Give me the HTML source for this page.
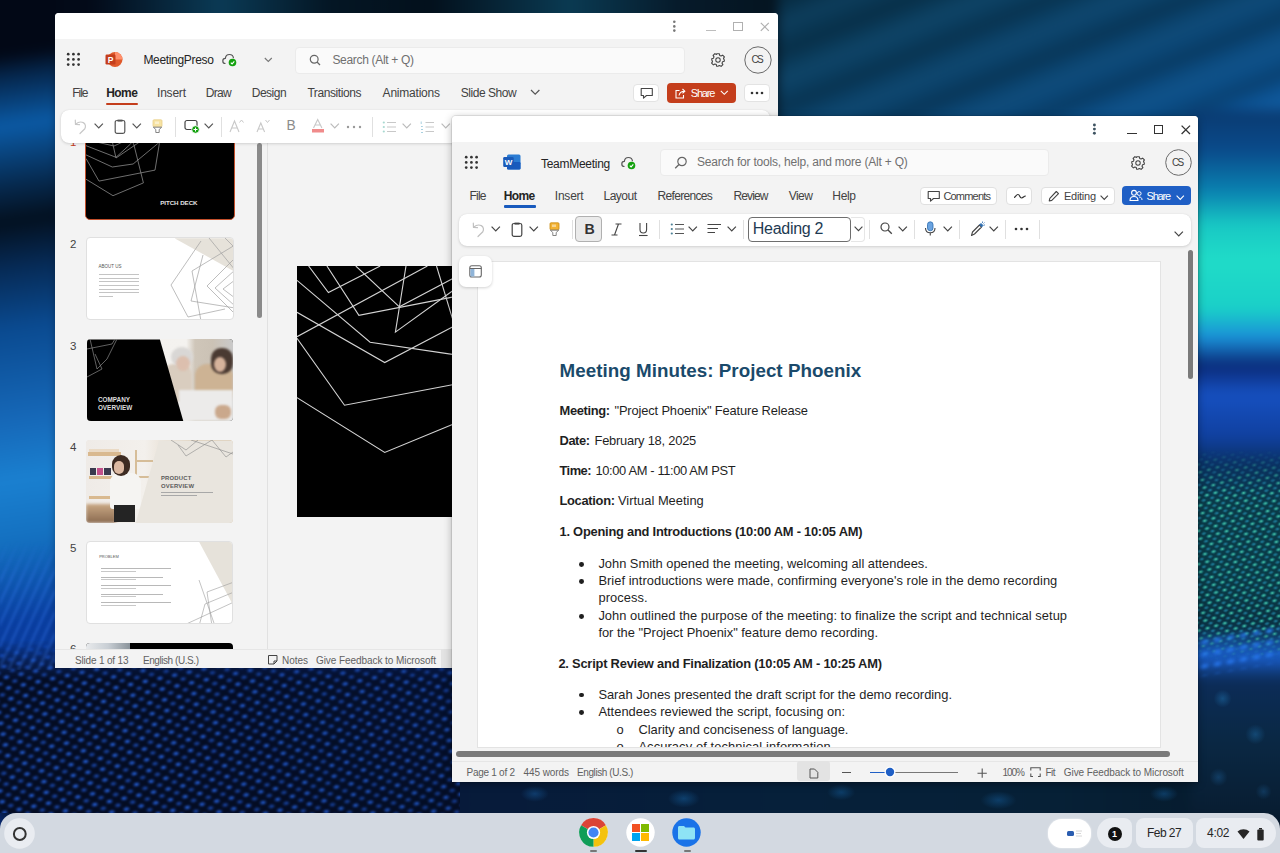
<!DOCTYPE html>
<html><head><meta charset="utf-8">
<style>
*{box-sizing:border-box;margin:0;padding:0}
html,body{width:1280px;height:853px;overflow:hidden;background:#041226;font-family:"Liberation Sans",sans-serif;position:relative}
.a{position:absolute}
.t{position:absolute;white-space:pre;line-height:1;font-family:"Liberation Sans",sans-serif}
svg.a{overflow:visible}
</style></head><body>
<div class="a" style="left:0;top:0;width:1280px;height:853px;overflow:hidden">
<div class="a" style="left:-40px;top:-40px;width:1360px;height:933px;filter:blur(6px)">
<div class="a" style="left:0px;top:0px;width:1360px;height:170px;background:linear-gradient(90deg,#030a18 0px,#030a18 130px,#0a3a55 260px,#041624 370px,#03101c 470px,#0a3a52 610px,#061a2a 720px,#051420 818px,#0a3a5e 1000px)"></div>
<div class="a" style="left:818px;top:0px;width:542px;height:170px;background:repeating-linear-gradient(-22deg,rgba(0,0,0,0) 0px,rgba(0,0,0,.18) 14px,rgba(0,0,0,0) 28px,rgba(80,160,220,.08) 40px,rgba(0,0,0,0) 52px),linear-gradient(160deg,#072c42 0%,#0a3c5c 30%,#0a426c 55%,#0b4e88 80%,#0c5cac 100%)"></div>
<div class="a" style="left:0px;top:0px;width:100px;height:900px;background:linear-gradient(172deg,#020816 0%,#020816 11%,#05254a 13.3%,#0b5aa5 18.9%,#06284c 25.6%,#03101f 29.4%,#062a55 34.4%,#0a4a90 41.1%,#1668b8 51.1%,#1a80d0 57.8%,#1470c0 64.4%,#0a3ea0 73.3%,#0a3490 84.4%,#082a78 94.8%,#061c50 100%)"></div>
<div class="a" style="left:40px;top:700px;width:470px;height:160px;background:linear-gradient(180deg,#0a2870 0%,#0a2460 35%,#081c48 70%,#061630 100%)"></div>
<div class="a" style="left:40px;top:700px;width:120px;height:120px;background:radial-gradient(ellipse at 30% 30%,rgba(30,80,190,.6),rgba(0,0,0,0) 70%)"></div>
<div class="a" style="left:480px;top:815px;width:880px;height:50px;background:linear-gradient(90deg,#071a3a 0%,#06203a 40%,#062036 70%,#051828 100%)"></div>
<div class="a" style="left:1230px;top:150px;width:130px;height:710px;background:linear-gradient(180deg,#0a3a70 0%,#0a4a8a 5.6%,#0a80b0 11.3%,#18c8c4 16.2%,#20dcc8 21.1%,#1ad0c8 28%,#1a90d8 32%,#0a2a78 36%,#1650c0 40%,#1040a0 46%,#0a3060 50%,#0a3a48 55%,#0a3a46 66%,#0a3040 73%,#1a60d0 76.8%,#0c2c58 80.3%,#0a2844 88.7%,#081c30 100%)"></div>
</div></div>
<div class="a" style="left:0;top:640px;width:460px;height:173px;overflow:hidden;-webkit-mask-image:linear-gradient(180deg,rgba(0,0,0,0) 0px,#000 40px)">
<div class="a" style="left:-100px;top:-230px;width:720px;height:540px;transform:rotate(-12deg);background:radial-gradient(ellipse 4px 2.4px at 50% 50%,rgba(55,125,255,1) 0%,rgba(30,90,225,.65) 55%,rgba(0,0,0,0) 100%) 0 0/15px 11px,radial-gradient(ellipse 3.8px 2.2px at 50% 50%,rgba(45,110,245,.95) 0%,rgba(30,90,220,.55) 55%,rgba(0,0,0,0) 100%) 7.5px 5.5px/15px 11px,#040c22;filter:blur(1px);-webkit-mask-image:linear-gradient(90deg,#000 0%,#000 35%,rgba(0,0,0,.75) 100%)"></div>
</div>
<div class="a" style="left:0;top:540px;width:55px;height:130px;overflow:hidden;background:repeating-linear-gradient(-65deg,rgba(30,90,230,.0) 0 4px,rgba(60,130,250,.3) 6px,rgba(0,0,0,0) 9px);filter:blur(.8px);-webkit-mask-image:linear-gradient(180deg,rgba(0,0,0,0),#000 30%)"></div>
<div class="a" style="left:452px;top:781px;width:828px;height:32px;overflow:hidden;background:radial-gradient(ellipse 14px 8px at 10% 40%,rgba(20,80,140,.6),transparent),radial-gradient(ellipse 16px 9px at 28% 55%,rgba(20,90,150,.55),transparent),radial-gradient(ellipse 14px 8px at 47% 35%,rgba(20,90,150,.5),transparent),radial-gradient(ellipse 18px 9px at 66% 60%,rgba(20,90,150,.5),transparent),radial-gradient(ellipse 14px 8px at 86% 40%,rgba(20,90,150,.5),transparent)"></div>
<div class="a" style="left:1198px;top:450px;width:82px;height:210px;overflow:hidden;-webkit-mask-image:linear-gradient(180deg,rgba(0,0,0,0),#000 20%,#000 85%,rgba(0,0,0,0))">
<div class="a" style="left:-60px;top:-40px;width:220px;height:280px;transform:rotate(-16deg);background:radial-gradient(ellipse 3.4px 2.2px at 50% 50%,rgba(90,220,180,.95) 0%,rgba(30,150,150,.6) 60%,rgba(0,0,0,0) 100%) 0 0/9px 8px,radial-gradient(ellipse 3px 2px at 50% 50%,rgba(40,160,200,.8) 0%,rgba(0,0,0,0) 100%) 4.5px 4px/9px 8px;filter:blur(0.7px)"></div>
</div>
<div class="a" style="left:1198px;top:670px;width:82px;height:143px;background:radial-gradient(circle 9px at 30% 20%,rgba(30,110,170,.5),transparent),radial-gradient(circle 10px at 70% 45%,rgba(30,110,170,.45),transparent),radial-gradient(circle 9px at 25% 75%,rgba(30,100,160,.4),transparent),radial-gradient(circle 8px at 80% 85%,rgba(30,100,160,.35),transparent)"></div>
<div class="a" style="left:1198px;top:630px;width:82px;height:40px;background:radial-gradient(ellipse 6px 4px at 50% 50%,rgba(40,120,240,.95),rgba(0,0,0,0)) 0 0/13px 12px;transform:skewY(-10deg);filter:blur(.8px)"></div>
<div class="a" style="left:55px;top:13px;width:723px;height:655px;background:#f3f3f3;border-radius:4px 4px 0 0"></div>
<div class="a" style="left:55px;top:13px;width:723px;height:26px;background:#fff;border-radius:4px 4px 0 0"></div>
<svg class="a" style="left:670px;top:18px;" width="10" height="16" viewBox="0 0 10 16"><circle cx="4.3" cy="3.8" r="1.3" fill="#777"/><circle cx="4.3" cy="8.4" r="1.3" fill="#777"/><circle cx="4.3" cy="12.6" r="1.3" fill="#777"/></svg>
<div class="a" style="left:706px;top:30px;width:10px;height:1px;background:#bdbdbd"></div>
<div class="a" style="left:733px;top:22px;width:10px;height:9px;border:1.3px solid #b0b0b0"></div>
<svg class="a" style="left:760px;top:22px;" width="10" height="10" viewBox="0 0 10 10"><path d="M0.8 0.8L8.8 8.8M8.8 0.8L0.8 8.8" stroke="#b0b0b0" stroke-width="1.2"/></svg>
<svg class="a" style="left:66px;top:52px;" width="16" height="16" viewBox="0 0 16 16"><circle cx="2.2" cy="2.2" r="1.35" fill="#333"/><circle cx="2.2" cy="7.4" r="1.35" fill="#333"/><circle cx="2.2" cy="12.600000000000001" r="1.35" fill="#333"/><circle cx="7.4" cy="2.2" r="1.35" fill="#333"/><circle cx="7.4" cy="7.4" r="1.35" fill="#333"/><circle cx="7.4" cy="12.600000000000001" r="1.35" fill="#333"/><circle cx="12.600000000000001" cy="2.2" r="1.35" fill="#333"/><circle cx="12.600000000000001" cy="7.4" r="1.35" fill="#333"/><circle cx="12.600000000000001" cy="12.600000000000001" r="1.35" fill="#333"/></svg>
<svg class="a" style="left:104px;top:51px;" width="20" height="18" viewBox="0 0 20 18"><circle cx="11" cy="8.5" r="7.5" fill="#e0592a"/><path d="M11 1A7.5 7.5 0 0 1 18.5 8.5H11Z" fill="#ff8f6b"/><rect x="1.5" y="3.5" width="10" height="10" rx="1.2" fill="#c43e1c"/><text x="6.5" y="11.8" font-family="Liberation Sans" font-weight="700" font-size="8.5" fill="#fff" text-anchor="middle">P</text></svg>
<div class="t" style="left:143.40px;top:53.84px;font-size:12px;font-weight:400;color:#242424;letter-spacing:-0.322px;">MeetingPreso</div>
<svg class="a" style="left:222px;top:53px;" width="16" height="14" viewBox="0 0 16 14"><path d="M3.5 10.5C1.8 10.5 0.8 9.3 0.8 7.9C0.8 6.5 1.9 5.4 3.3 5.4C3.6 3.2 5.3 1.5 7.4 1.5C9.6 1.5 11.3 3.2 11.5 5.3" fill="none" stroke="#555" stroke-width="1.2"/><circle cx="10.5" cy="9.5" r="3.8" fill="#13a10e"/><path d="M8.8 9.6L10.1 10.9L12.3 8.4" fill="none" stroke="#fff" stroke-width="1.1"/></svg>
<svg class="a" style="left:264px;top:57px;" width="9" height="6" viewBox="0 0 9 6"><path d="M0.8 1L4.3 4.5L7.8 1" fill="none" stroke="#777" stroke-width="1.1"/></svg>
<div class="a" style="left:294.6px;top:47px;width:390px;height:26.5px;background:#fafafa;border:1px solid #ebebeb;border-radius:4px"></div>
<svg class="a" style="left:309px;top:54px;" width="13" height="13" viewBox="0 0 13 13"><circle cx="5.2" cy="5.2" r="3.9" fill="none" stroke="#666" stroke-width="1.2"/><path d="M8 8L11 11" stroke="#666" stroke-width="1.3"/></svg>
<div class="t" style="left:332.40px;top:53.84px;font-size:12px;font-weight:400;color:#707070;letter-spacing:-0.318px;">Search (Alt + Q)</div>
<svg class="a" style="left:710.5px;top:52.7px;" width="14" height="14" viewBox="0 0 14 14"><g transform="translate(7,7)"><path d="M-1.3,-6.3 L1.3,-6.3 L1.7,-4.6 L3.1,-4 L4.6,-4.9 L6.4,-3.1 L5.5,-1.6 L6.1,-0.2 L6.3,0 L6.3,1.3 L4.6,1.7 L4,3.1 L4.9,4.6 L3.1,6.4 L1.6,5.5 L0.2,6.1 L-1.3,6.3 L-1.7,4.6 L-3.1,4 L-4.6,4.9 L-6.4,3.1 L-5.5,1.6 L-6.1,0.2 L-6.3,-1.3 L-4.6,-1.7 L-4,-3.1 L-4.9,-4.6 L-3.1,-6.4 L-1.6,-5.5 Z" fill="none" stroke="#444" stroke-width="1.1" stroke-linejoin="round"/><circle r="2.2" fill="none" stroke="#444" stroke-width="1.1"/></g></svg>
<svg class="a" style="left:743.5px;top:45.7px;" width="28" height="28" viewBox="0 0 28 28"><circle cx="14" cy="14" r="13.2" fill="none" stroke="#6a6a6a" stroke-width="1"/></svg>
<div class="t" style="left:751.40px;top:55.44px;font-size:10px;font-weight:400;color:#424242;letter-spacing:-1.706px;">CS</div>
<div class="t" style="left:72.30px;top:86.84px;font-size:12px;font-weight:400;color:#424242;letter-spacing:-1.048px;">File</div>
<div class="t" style="left:157.00px;top:86.84px;font-size:12px;font-weight:400;color:#424242;letter-spacing:-0.203px;">Insert</div>
<div class="t" style="left:205.80px;top:86.84px;font-size:12px;font-weight:400;color:#424242;letter-spacing:-0.672px;">Draw</div>
<div class="t" style="left:251.70px;top:86.84px;font-size:12px;font-weight:400;color:#424242;letter-spacing:-0.472px;">Design</div>
<div class="t" style="left:307.40px;top:86.84px;font-size:12px;font-weight:400;color:#424242;letter-spacing:-0.425px;">Transitions</div>
<div class="t" style="left:382.60px;top:86.84px;font-size:12px;font-weight:400;color:#424242;letter-spacing:-0.219px;">Animations</div>
<div class="t" style="left:460.80px;top:86.84px;font-size:12px;font-weight:400;color:#424242;letter-spacing:-0.472px;">Slide Show</div>
<div class="t" style="left:106.20px;top:86.84px;font-size:12px;font-weight:700;color:#242424;letter-spacing:-0.548px;">Home</div>
<div class="a" style="left:106px;top:103px;width:32px;height:2.2px;background:#c43e1c;border-radius:1px"></div>
<svg class="a" style="left:530px;top:89px;" width="11" height="7" viewBox="0 0 11 7"><path d="M1 1L5.2 5.2L9.4 1" fill="none" stroke="#555" stroke-width="1.2"/></svg>
<div class="a" style="left:632.8px;top:83.7px;width:26.7px;height:18.5px;background:#fff;border:1px solid #e3e3e3;border-radius:4px"></div>
<svg class="a" style="left:639.5px;top:86.5px;" width="14" height="13" viewBox="0 0 14 13"><path d="M1.2 1.5H12.3V8.5H6.5L3.5 11.2V8.5H1.2Z" fill="none" stroke="#444" stroke-width="1.1" stroke-linejoin="round"/></svg>
<div class="a" style="left:667px;top:83.3px;width:69.3px;height:19.5px;background:#c43e1c;border-radius:4px"></div>
<svg class="a" style="left:674px;top:86.5px;" width="13" height="13" viewBox="0 0 13 13"><path d="M5.5 3.5H2V11H9.5V8" fill="none" stroke="#fff" stroke-width="1.1"/><path d="M5 8.5C5.5 5.5 7.5 4.2 10.5 4.2M8.5 2L10.8 4.2L8.5 6.4" fill="none" stroke="#fff" stroke-width="1.1"/></svg>
<div class="t" style="left:690.80px;top:87.69px;font-size:11px;font-weight:400;color:#fff;letter-spacing:-1.190px;">Share</div>
<svg class="a" style="left:719.5px;top:90px;" width="9" height="6" viewBox="0 0 9 6"><path d="M0.8 0.8L4.3 4.3L7.8 0.8" fill="none" stroke="#fff" stroke-width="1.1"/></svg>
<div class="a" style="left:744px;top:83.7px;width:26px;height:18.3px;background:#fff;border:1px solid #e3e3e3;border-radius:4px"></div>
<svg class="a" style="left:750px;top:91px;" width="14" height="4" viewBox="0 0 14 4"><circle cx="2" cy="2" r="1.3" fill="#333"/><circle cx="7" cy="2" r="1.3" fill="#333"/><circle cx="12" cy="2" r="1.3" fill="#333"/></svg>
<div class="a" style="left:268px;top:143px;width:510px;height:506px;background:#f3f3f3"></div>
<div class="a" style="left:267px;top:143px;width:1px;height:506px;background:#e1e1e1"></div>
<div class="a" style="left:257px;top:143px;width:5px;height:175px;background:#8a8a8a;border-radius:3px"></div>
<div class="a" style="left:55px;top:143px;width:212px;height:506px;overflow:hidden">
<div class="t" style="left:15px;top:-6px;font-size:11.5px;color:#c43e1c">1</div>
<div class="a" style="left:29.599999999999994px;top:-8px;width:150px;height:85px;overflow:hidden;border-radius:4px;background:#000;border:1.8px solid #c4502c;border-radius:5px"><svg width="150" height="85" style="position:absolute;left:0;top:0"><g fill="none" stroke="#8a8a8a" stroke-width="0.8"><path d="M0 43.2L27 59.7L57.4 46.9L47.7 7.9L40 0"/><path d="M0 22.5L13 45.1L69 34.1L73.3 7.9L74 0"/><path d="M0 18.9L26.3 31L47.1 28L71.4 7.9L80 0"/><path d="M0 9.7L30 21.3L44.6 7.9L50 0"/><path d="M6 5L28 10L50 0"/><path d="M25 0L30 22L55 5"/></g></svg><div class="t" style="left:74.6px;top:63.6px;font-size:6.2px;font-weight:700;color:#e4e4e4;letter-spacing:-0.05px">PITCH DECK</div></div>
<div class="t" style="left:15px;top:96px;font-size:11.5px;color:#424242">2</div>
<div class="a" style="left:30.5px;top:94.30000000000001px;width:148px;height:83px;overflow:hidden;border-radius:4px;background:#fff;border:1px solid #e0e0e0"><div class="a" style="left:88px;top:0;width:60px;height:83px;background:#e6e2da;clip-path:polygon(0 0,100% 0,100% 40%)"></div><svg width="148" height="83" style="position:absolute;left:0;top:0"><g fill="none" stroke="#a0a0a0" stroke-width="0.7"><path d="M114 3L84 47L101 79L138 71"/><path d="M116 17L104 63L148 70"/><path d="M148 7L105 33L114 83"/><path d="M148 20L120 48L148 76"/><path d="M148 32L128 50L148 68"/><path d="M148 42L136 51L148 60"/><path d="M122 0L148 32"/><path d="M138 0L148 10"/></g></svg><div class="t" style="left:12px;top:27px;font-size:4.5px;color:#555">ABOUT US</div><div class="a" style="left:12px;top:36.0px;width:40px;height:1px;background:#c4c4c4"></div><div class="a" style="left:12px;top:39.6px;width:40px;height:1px;background:#c4c4c4"></div><div class="a" style="left:12px;top:43.2px;width:40px;height:1px;background:#c4c4c4"></div><div class="a" style="left:12px;top:46.8px;width:40px;height:1px;background:#c4c4c4"></div><div class="a" style="left:12px;top:50.4px;width:40px;height:1px;background:#c4c4c4"></div><div class="a" style="left:12px;top:54.0px;width:40px;height:1px;background:#c4c4c4"></div><div class="a" style="left:12px;top:57.6px;width:14px;height:1px;background:#c4c4c4"></div></div>
<div class="t" style="left:15px;top:198px;font-size:11.5px;color:#424242">3</div>
<div class="a" style="left:31.900000000000006px;top:196.39999999999998px;width:146px;height:82px;overflow:hidden;border-radius:4px;background:#000"><div class="a" style="left:0;top:0;width:146px;height:82px;background:linear-gradient(90deg,#f3f1ee 0%,#f4f2ef 68%,#cfc6b9 74%,#cbc2b5 86%,#c9c9c9 100%)"></div><div class="a" style="left:76px;top:25px;width:29px;height:38px;border-radius:10px;background:#d9cdbf;filter:blur(1px)"></div><div class="a" style="left:84px;top:8px;width:22px;height:20px;border-radius:50%;background:#d9d7d5;filter:blur(1px)"></div><div class="a" style="left:89px;top:17px;width:14px;height:15px;border-radius:50%;background:#dcbfae;filter:blur(1px)"></div><div class="a" style="left:108px;top:25px;width:38px;height:40px;border-radius:12px;background:#cdb394;filter:blur(1px)"></div><div class="a" style="left:124px;top:9px;width:22px;height:26px;border-radius:10px;background:#4a3a32;filter:blur(1px)"></div><div class="a" style="left:127px;top:18px;width:12px;height:15px;border-radius:50%;background:#d6b39c;filter:blur(1px)"></div><div class="a" style="left:92px;top:51px;width:54px;height:31px;background:#ecebea;filter:blur(1.2px)"></div><div class="a" style="left:128px;top:66px;width:16px;height:14px;border-radius:6px;background:#caa88c;filter:blur(1px)"></div><div class="a" style="left:0;top:0;width:146px;height:82px;background:#000;clip-path:polygon(0 0,73px 0,96.5px 82px,0 82px)"></div><svg width="146" height="82" style="position:absolute;left:0;top:0"><g fill="none" stroke="#8a8a8a" stroke-width="0.7"><path d="M0 10L25 5L28 0"/><path d="M3 0L10 30L20 20L30 0"/><path d="M0 38L15 30L8 15"/></g></svg><div class="t" style="left:11px;top:56.5px;font-size:6.4px;font-weight:700;color:#ddd;line-height:8.5px">COMPANY<br>OVERVIEW</div></div>
<div class="t" style="left:15px;top:299px;font-size:11.5px;color:#424242">4</div>
<div class="a" style="left:31.200000000000003px;top:297.4px;width:146.5px;height:83px;overflow:hidden;border-radius:4px;background:#e9e5de"><div class="a" style="left:0;top:0;width:147px;height:83px;background:linear-gradient(90deg,#efebe7 0%,#f3f0ec 40%,#e6dccf 60%,#d9c4a8 75%)"></div><div class="a" style="left:2px;top:12px;width:33px;height:4px;background:#d9b98f"></div><div class="a" style="left:3px;top:9px;width:30px;height:3px;background:#eadac5"></div><div class="a" style="left:4px;top:28px;width:6px;height:7px;background:#3a3a4e"></div><div class="a" style="left:11px;top:28px;width:6px;height:7px;background:#c2508a"></div><div class="a" style="left:18px;top:28px;width:7px;height:7px;background:#3a3a4e"></div><div class="a" style="left:3px;top:35.5px;width:32px;height:3px;background:#d9b98f"></div><div class="a" style="left:3px;top:56px;width:32px;height:3px;background:#d9b98f"></div><div class="a" style="left:49px;top:10px;width:2px;height:50px;background:#d6bd98"></div><div class="a" style="left:49px;top:20px;width:18px;height:2px;background:#d6bd98"></div><div class="a" style="left:49px;top:36px;width:16px;height:2px;background:#d6bd98"></div><div class="a" style="left:0;top:64px;width:30px;height:19px;background:linear-gradient(180deg,#c9a884,#8a6a50);filter:blur(1.5px)"></div><div class="a" style="left:24px;top:33px;width:31px;height:36px;border-radius:9px 9px 3px 3px;background:#f5f4f2;filter:blur(.6px)"></div><div class="a" style="left:26px;top:15px;width:18px;height:21px;border-radius:9px;background:#3d2b22;filter:blur(.6px)"></div><div class="a" style="left:28px;top:21px;width:10px;height:13px;border-radius:5px;background:#dcb9a2"></div><div class="a" style="left:28px;top:65px;width:21px;height:17px;background:#242424;filter:blur(.6px)"></div><div class="a" style="left:0;top:0;width:147px;height:83px;background:#e9e5de;clip-path:polygon(72.8px 0,147px 0,147px 83px,49.4px 83px)"></div><svg width="147" height="83" style="position:absolute;left:0;top:0"><g fill="none" stroke="#8a8a8a" stroke-width="0.6"><path d="M85 0L100 10L112 0M92 5L100 16L126 0L140 17L147 12M105 0L147 14"/></g></svg><div class="t" style="left:74.8px;top:33.5px;font-size:5.9px;font-weight:700;color:#5a5a5a;line-height:8.2px;letter-spacing:.2px">PRODUCT<br>OVERVIEW</div><div class="a" style="left:74.8px;top:52px;width:52px;height:1px;background:#a8a8a8"></div><div class="a" style="left:74.8px;top:55px;width:36px;height:1px;background:#a8a8a8"></div></div>
<div class="t" style="left:15px;top:400px;font-size:11.5px;color:#424242">5</div>
<div class="a" style="left:31.200000000000003px;top:398px;width:146.5px;height:83.4px;overflow:hidden;border-radius:4px;background:#fff;border:1px solid #e0e0e0"><div class="a" style="left:0;top:0;width:147px;height:84px;background:#e6e2da;clip-path:polygon(112px 0,147px 0,147px 65px)"></div><svg width="147" height="84" style="position:absolute;left:0;top:0"><g fill="none" stroke="#9a9a9a" stroke-width="0.6"><path d="M147 40L120 50L125 84"/><path d="M95 84L147 60"/><path d="M128 84L112 38"/><path d="M147 50L118 62L112 84"/></g></svg><div class="t" style="left:12px;top:13px;font-size:4px;color:#555">PROBLEM</div><div class="a" style="left:14px;top:26.0px;width:70px;height:1px;background:#b8b8b8"></div><div class="a" style="left:14px;top:28.5px;width:35px;height:1px;background:#c8c8c8"></div><div class="a" style="left:14px;top:34.5px;width:62px;height:1px;background:#b8b8b8"></div><div class="a" style="left:14px;top:37.0px;width:35px;height:1px;background:#c8c8c8"></div><div class="a" style="left:14px;top:43.0px;width:70px;height:1px;background:#b8b8b8"></div><div class="a" style="left:14px;top:45.5px;width:35px;height:1px;background:#c8c8c8"></div><div class="a" style="left:14px;top:51.5px;width:62px;height:1px;background:#b8b8b8"></div><div class="a" style="left:14px;top:54.0px;width:35px;height:1px;background:#c8c8c8"></div><div class="a" style="left:14px;top:60.0px;width:70px;height:1px;background:#b8b8b8"></div><div class="a" style="left:14px;top:62.5px;width:35px;height:1px;background:#c8c8c8"></div></div>
<div class="t" style="left:15px;top:501px;font-size:11.5px;color:#424242">6</div>
<div class="a" style="left:31.200000000000003px;top:499.6px;width:146.5px;height:83px;overflow:hidden;border-radius:4px;background:#000"><div class="a" style="left:0;top:0;width:44px;height:83px;background:linear-gradient(90deg,#e8eaec,#c8ced4,#8a939a)"></div></div>
</div>
<div class="a" style="left:296.7px;top:265.5px;width:460px;height:251px;background:#000;overflow:hidden">
<svg width="460" height="251" style="position:absolute;left:0;top:0"><g fill="none" stroke="#d4d4d4" stroke-width="1.1"><path d="M11.6 0L31.4 26.5L83.2 0"/><path d="M29.9 0L61.9 49.4L155.4 31.1"/><path d="M0 70.7L130.4 0"/><path d="M0 14.3L73.1 76.2L155.4 88.4"/><path d="M0 46.3L87.7 96.6L155.4 60.9"/><path d="M0 72.2L47.5 139.2L155.4 118.8"/><path d="M0 131.6L87.7 186.5L155.4 158.4"/><path d="M58.8 0L102.4 40.8L155.4 12.8"/><path d="M109 0L98.4 66.1L155.4 25"/><path d="M139.5 0L155.4 52.4"/></g></svg></div>
<div class="a" style="left:55px;top:649px;width:397px;height:19px;background:#f3f3f3;border-top:1px solid #e6e6e6"></div>
<div class="t" style="left:75.00px;top:655.53px;font-size:10px;font-weight:400;color:#616161;letter-spacing:-0.176px;">Slide 1 of 13</div>
<div class="t" style="left:143.00px;top:655.53px;font-size:10px;font-weight:400;color:#616161;letter-spacing:-0.438px;">English (U.S.)</div>
<svg class="a" style="left:267px;top:654px;" width="12" height="12" viewBox="0 0 12 12"><path d="M1.5 1.5H10V7L7 10H1.5Z" fill="none" stroke="#444" stroke-width="1"/><path d="M7 10V7H10" fill="none" stroke="#444" stroke-width="1"/></svg>
<div class="t" style="left:282.00px;top:655.53px;font-size:10px;font-weight:400;color:#616161;letter-spacing:-0.031px;">Notes</div>
<div class="t" style="left:316.00px;top:655.53px;font-size:10px;font-weight:400;color:#616161;letter-spacing:-0.069px;">Give Feedback to Microsoft</div>
<div class="a" style="left:441.4px;top:649px;width:12px;height:19px;background:#e3e3e3"></div>
<div class="a" style="left:61px;top:110px;width:709px;height:32.6px;background:#fff;border-radius:8px;box-shadow:0 1px 3px rgba(0,0,0,.14),0 0 1px rgba(0,0,0,.1)"></div>
<svg class="a" style="left:74px;top:119px;" width="14" height="15" viewBox="0 0 14 15"><path d="M1.5 5.2C4 3.2 7 2.5 9.3 3.6C11.6 4.8 12 7.6 10.8 9.8L6 14.5" fill="none" stroke="#c8c8c8" stroke-width="1.2" stroke-linecap="round"/><path d="M1.3 1.2L1.5 5.4L5.5 5.6" fill="none" stroke="#c8c8c8" stroke-width="1.2" stroke-linecap="round" stroke-linejoin="round"/></svg>
<svg class="a" style="left:94px;top:123px;" width="9.5" height="5.5" viewBox="0 0 9.5 5.5"><path d="M0.6 0.6L4.75 4.9L8.9 0.6" fill="none" stroke="#555" stroke-width="1.2"/></svg>
<svg class="a" style="left:113.5px;top:119px;" width="12" height="15" viewBox="0 0 12 15"><rect x="1.2" y="1.5" width="9.6" height="12.8" rx="1.8" fill="none" stroke="#555" stroke-width="1.2"/><path d="M3.5 1.6H8.5" stroke="#555" stroke-width="2"/></svg>
<svg class="a" style="left:131.8px;top:123px;" width="9.5" height="5.5" viewBox="0 0 9.5 5.5"><path d="M0.6 0.6L4.75 4.9L8.9 0.6" fill="none" stroke="#555" stroke-width="1.2"/></svg>
<svg class="a" style="left:151.5px;top:119px;" width="12" height="15" viewBox="0 0 12 15"><rect x="1" y="0.8" width="9" height="7" rx="1" fill="#f7e3a3" stroke="#e8cf8a" stroke-width="0.8"/><rect x="3" y="2.5" width="4" height="2.5" fill="#fff" opacity=".45"/><path d="M1.3 8.2H9.7L7.2 10.5V13.5H3.8V10.5Z" fill="#fff" stroke="#777" stroke-width="0.9" stroke-linejoin="round"/></svg>
<div class="a" style="left:174.5px;top:117px;width:1px;height:20px;background:#e0e0e0"></div>
<svg class="a" style="left:184px;top:119px;" width="17" height="15" viewBox="0 0 17 15"><rect x="1" y="1.5" width="12" height="9" rx="2" fill="none" stroke="#444" stroke-width="1.2"/><circle cx="11.5" cy="10.5" r="3.8" fill="#13a10e" stroke="#fff" stroke-width="0.8"/><path d="M11.5 8.5V12.5M9.5 10.5H13.5" stroke="#fff" stroke-width="1"/></svg>
<svg class="a" style="left:204.3px;top:123px;" width="9.5" height="5.5" viewBox="0 0 9.5 5.5"><path d="M0.6 0.6L4.75 4.9L8.9 0.6" fill="none" stroke="#555" stroke-width="1.2"/></svg>
<div class="a" style="left:220.7px;top:117px;width:1px;height:20px;background:#e0e0e0"></div>
<svg class="a" style="left:229px;top:118px;" width="16" height="15" viewBox="0 0 16 15"><path d="M1 14L5.5 3L10 14M2.8 10H8.2" fill="none" stroke="#c8c8c8" stroke-width="1.1"/><path d="M10.5 4.5L12.5 2L14.5 4.5" fill="none" stroke="#c8c8c8" stroke-width="1"/></svg>
<svg class="a" style="left:255.5px;top:118px;" width="16" height="15" viewBox="0 0 16 15"><path d="M1 14L4.8 5L8.6 14M2.5 11H7.1" fill="none" stroke="#c8c8c8" stroke-width="1.1"/><path d="M9.5 2L11.5 4.5L13.5 2" fill="none" stroke="#c8c8c8" stroke-width="1"/></svg>
<div class="t" style="left:286.50px;top:118.72px;font-size:13.8px;font-weight:400;color:#8c8c8c;letter-spacing:0.000px;">B</div>
<svg class="a" style="left:310.5px;top:118px;" width="14" height="16" viewBox="0 0 14 16"><path d="M2.5 10L6.7 1.5L10.9 10M4.2 7H9.2" fill="none" stroke="#c8c8c8" stroke-width="1.1"/><rect x="1" y="11" width="12" height="3.5" fill="#f08b8b"/></svg>
<svg class="a" style="left:329.8px;top:123px;" width="9.5" height="5.5" viewBox="0 0 9.5 5.5"><path d="M0.6 0.6L4.75 4.9L8.9 0.6" fill="none" stroke="#bbb" stroke-width="1.2"/></svg>
<svg class="a" style="left:346px;top:124.5px;" width="18" height="4" viewBox="0 0 18 4"><circle cx="2" cy="2" r="1.2" fill="#999"/><circle cx="8" cy="2" r="1.2" fill="#999"/><circle cx="14" cy="2" r="1.2" fill="#999"/></svg>
<div class="a" style="left:372.4px;top:117px;width:1px;height:20px;background:#e0e0e0"></div>
<svg class="a" style="left:382px;top:119.5px;" width="15" height="14" viewBox="0 0 15 14"><circle cx="1.8" cy="2.5" r="1.1" fill="#a8d8d0"/><circle cx="1.8" cy="7" r="1.1" fill="#a8d8d0"/><circle cx="1.8" cy="11.5" r="1.1" fill="#a8d8d0"/><path d="M5 2.5H14M5 7H14M5 11.5H14" stroke="#c8c8c8" stroke-width="1.1"/></svg>
<svg class="a" style="left:401.5px;top:123px;" width="9.5" height="5.5" viewBox="0 0 9.5 5.5"><path d="M0.6 0.6L4.75 4.9L8.9 0.6" fill="none" stroke="#bbb" stroke-width="1.2"/></svg>
<svg class="a" style="left:420px;top:119.5px;" width="15" height="14" viewBox="0 0 15 14"><path d="M1.2 1.5V4M1 6.5H2.8M1 9.5H3M1 12.5H3" stroke="#a8d0e0" stroke-width="1"/><path d="M5.5 2.5H14M5.5 7H14M5.5 11.5H14" stroke="#c8c8c8" stroke-width="1.1"/></svg>
<svg class="a" style="left:440.5px;top:123px;" width="9.5" height="5.5" viewBox="0 0 9.5 5.5"><path d="M0.6 0.6L4.75 4.9L8.9 0.6" fill="none" stroke="#bbb" stroke-width="1.2"/></svg>
<div class="a" style="left:452px;top:116px;width:746px;height:666px;background:#f3f3f3;border-radius:4px 4px 0 0;box-shadow:0 0 0 1px rgba(0,0,0,.08),0 2px 8px rgba(0,0,0,.3)"></div>
<div class="a" style="left:452px;top:116px;width:746px;height:26px;background:#fff;border-radius:4px 4px 0 0"></div>
<svg class="a" style="left:1090px;top:122px;" width="10" height="16" viewBox="0 0 10 16"><circle cx="4.4" cy="3" r="1.45" fill="#3d5260"/><circle cx="4.4" cy="7.1" r="1.45" fill="#3d5260"/><circle cx="4.4" cy="11.2" r="1.45" fill="#3d5260"/></svg>
<div class="a" style="left:1126.8px;top:133px;width:10px;height:1.3px;background:#333"></div>
<div class="a" style="left:1153.5px;top:124.6px;width:9.6px;height:9.6px;border:1.3px solid #333"></div>
<svg class="a" style="left:1180.5px;top:124.6px;" width="10" height="10" viewBox="0 0 10 10"><path d="M0.6 0.6L9 9M9 0.6L0.6 9" stroke="#333" stroke-width="1.3"/></svg>
<svg class="a" style="left:463.5px;top:154.5px;" width="16" height="16" viewBox="0 0 16 16"><circle cx="2.2" cy="2.2" r="1.35" fill="#333"/><circle cx="2.2" cy="7.4" r="1.35" fill="#333"/><circle cx="2.2" cy="12.600000000000001" r="1.35" fill="#333"/><circle cx="7.4" cy="2.2" r="1.35" fill="#333"/><circle cx="7.4" cy="7.4" r="1.35" fill="#333"/><circle cx="7.4" cy="12.600000000000001" r="1.35" fill="#333"/><circle cx="12.600000000000001" cy="2.2" r="1.35" fill="#333"/><circle cx="12.600000000000001" cy="7.4" r="1.35" fill="#333"/><circle cx="12.600000000000001" cy="12.600000000000001" r="1.35" fill="#333"/></svg>
<svg class="a" style="left:502px;top:153px;" width="20" height="18" viewBox="0 0 20 18"><rect x="5" y="1.5" width="13.5" height="15" rx="1.5" fill="#2b7cd3"/><rect x="5" y="9" width="13.5" height="7.5" rx="1.2" fill="#185abd"/><rect x="1.2" y="4" width="10.5" height="10" rx="1.2" fill="#1a5ab8"/><text x="6.5" y="12.2" font-family="Liberation Sans" font-weight="700" font-size="8" fill="#fff" text-anchor="middle">W</text></svg>
<div class="t" style="left:541.00px;top:157.64px;font-size:12px;font-weight:400;color:#242424;letter-spacing:-0.275px;">TeamMeeting</div>
<svg class="a" style="left:620.5px;top:156px;" width="16" height="14" viewBox="0 0 16 14"><path d="M3.5 10.5C1.8 10.5 0.8 9.3 0.8 7.9C0.8 6.5 1.9 5.4 3.3 5.4C3.6 3.2 5.3 1.5 7.4 1.5C9.6 1.5 11.3 3.2 11.5 5.3" fill="none" stroke="#555" stroke-width="1.2"/><circle cx="10.5" cy="9.5" r="3.8" fill="#13a10e"/><path d="M8.8 9.6L10.1 10.9L12.3 8.4" fill="none" stroke="#fff" stroke-width="1.1"/></svg>
<div class="a" style="left:659.5px;top:149.4px;width:389.5px;height:26.6px;background:#fafafa;border:1px solid #ebebeb;border-radius:4px"></div>
<svg class="a" style="left:673.5px;top:156px;" width="14" height="14" viewBox="0 0 14 14"><circle cx="8" cy="5.5" r="4.2" fill="none" stroke="#666" stroke-width="1.2"/><path d="M5 8.5L1.2 12.3" stroke="#666" stroke-width="1.3"/></svg>
<div class="t" style="left:697.00px;top:156.14px;font-size:12px;font-weight:400;color:#707070;letter-spacing:-0.203px;">Search for tools, help, and more (Alt + Q)</div>
<svg class="a" style="left:1131px;top:155.5px;" width="14" height="14" viewBox="0 0 14 14"><g transform="translate(7,7)"><path d="M-1.3,-6.3 L1.3,-6.3 L1.7,-4.6 L3.1,-4 L4.6,-4.9 L6.4,-3.1 L5.5,-1.6 L6.1,-0.2 L6.3,0 L6.3,1.3 L4.6,1.7 L4,3.1 L4.9,4.6 L3.1,6.4 L1.6,5.5 L0.2,6.1 L-1.3,6.3 L-1.7,4.6 L-3.1,4 L-4.6,4.9 L-6.4,3.1 L-5.5,1.6 L-6.1,0.2 L-6.3,-1.3 L-4.6,-1.7 L-4,-3.1 L-4.9,-4.6 L-3.1,-6.4 L-1.6,-5.5 Z" fill="none" stroke="#444" stroke-width="1.1" stroke-linejoin="round"/><circle r="2.2" fill="none" stroke="#444" stroke-width="1.1"/></g></svg>
<svg class="a" style="left:1164.5px;top:148.9px;" width="28" height="28" viewBox="0 0 28 28"><circle cx="13.5" cy="13.5" r="12.8" fill="none" stroke="#6a6a6a" stroke-width="1"/></svg>
<div class="t" style="left:1171.90px;top:157.94px;font-size:10px;font-weight:400;color:#424242;letter-spacing:-1.706px;">CS</div>
<div class="t" style="left:469.60px;top:189.84px;font-size:12px;font-weight:400;color:#424242;letter-spacing:-0.815px;">File</div>
<div class="t" style="left:554.80px;top:189.84px;font-size:12px;font-weight:400;color:#424242;letter-spacing:-0.223px;">Insert</div>
<div class="t" style="left:603.50px;top:189.84px;font-size:12px;font-weight:400;color:#424242;letter-spacing:-0.506px;">Layout</div>
<div class="t" style="left:657.60px;top:189.84px;font-size:12px;font-weight:400;color:#424242;letter-spacing:-0.686px;">References</div>
<div class="t" style="left:733.50px;top:189.84px;font-size:12px;font-weight:400;color:#424242;letter-spacing:-0.872px;">Review</div>
<div class="t" style="left:788.80px;top:189.84px;font-size:12px;font-weight:400;color:#424242;letter-spacing:-0.599px;">View</div>
<div class="t" style="left:832.30px;top:189.84px;font-size:12px;font-weight:400;color:#424242;letter-spacing:-0.329px;">Help</div>
<div class="t" style="left:503.80px;top:189.84px;font-size:12px;font-weight:700;color:#242424;letter-spacing:-0.615px;">Home</div>
<div class="a" style="left:504px;top:205.3px;width:31.5px;height:2.3px;background:#185abd;border-radius:1px"></div>
<div class="a" style="left:919.6px;top:187px;width:77.7px;height:17.7px;background:#fff;border:1px solid #e0e0e0;border-radius:4px"></div>
<svg class="a" style="left:926.5px;top:189.5px;" width="14" height="13" viewBox="0 0 14 13"><path d="M1.2 1.5H12.3V8.5H6.5L3.5 11.2V8.5H1.2Z" fill="none" stroke="#444" stroke-width="1.1" stroke-linejoin="round"/></svg>
<div class="t" style="left:943.40px;top:190.69px;font-size:11px;font-weight:400;color:#424242;letter-spacing:-0.798px;">Comments</div>
<div class="a" style="left:1006px;top:187px;width:26px;height:17.7px;background:#fff;border:1px solid #e0e0e0;border-radius:4px"></div>
<svg class="a" style="left:1012.5px;top:192.5px;" width="14" height="7" viewBox="0 0 14 7"><path d="M1 4.5C2.5 4.5 3 1.5 5 1.5C7 1.5 6.5 5 8.5 5C10.5 5 10.5 3 12.8 3" fill="none" stroke="#333" stroke-width="1.2"/></svg>
<div class="a" style="left:1041px;top:187px;width:73.5px;height:18px;background:#fff;border:1px solid #e0e0e0;border-radius:4px"></div>
<svg class="a" style="left:1048px;top:189.5px;" width="12" height="12" viewBox="0 0 12 12"><path d="M8.3 1.5L10.5 3.7L3.8 10.4L1.2 11L1.8 8.4Z" fill="none" stroke="#444" stroke-width="1.1" stroke-linejoin="round"/></svg>
<div class="t" style="left:1064.00px;top:190.69px;font-size:11px;font-weight:400;color:#424242;letter-spacing:-0.273px;">Editing</div>
<svg class="a" style="left:1099.5px;top:194.5px;" width="8.5" height="5" viewBox="0 0 8.5 5"><path d="M0.6 0.6L4.25 4.4L7.9 0.6" fill="none" stroke="#444" stroke-width="1.1"/></svg>
<div class="a" style="left:1121.9px;top:185.7px;width:69.1px;height:19.7px;background:#1f5fc5;border-radius:4px"></div>
<svg class="a" style="left:1129px;top:188.5px;" width="14" height="13" viewBox="0 0 14 13"><circle cx="5" cy="3.8" r="2.4" fill="none" stroke="#fff" stroke-width="1.1"/><path d="M1 11.5C1 8.5 2.5 7.5 5 7.5C7.5 7.5 9 8.5 9 11.5Z" fill="none" stroke="#fff" stroke-width="1.1"/><circle cx="10.2" cy="4.5" r="1.9" fill="none" stroke="#fff" stroke-width="1"/><path d="M10 8C12 8 13 9 13 11" fill="none" stroke="#fff" stroke-width="1"/></svg>
<div class="t" style="left:1146.50px;top:190.69px;font-size:11px;font-weight:400;color:#fff;letter-spacing:-1.190px;">Share</div>
<svg class="a" style="left:1176px;top:194.5px;" width="8.5" height="5" viewBox="0 0 8.5 5"><path d="M0.6 0.6L4.25 4.4L7.9 0.6" fill="none" stroke="#fff" stroke-width="1.1"/></svg>
<div class="a" style="left:452px;top:246px;width:746px;height:515px;background:#f3f3f3"></div>
<div class="a" style="left:477.5px;top:262.3px;width:682px;height:485px;background:#fff;box-shadow:0 0 0 1px #e3e3e3"></div>
<div class="a" style="left:459.3px;top:255.8px;width:33px;height:31.7px;background:#fff;border-radius:7px;box-shadow:0 1px 3px rgba(0,0,0,.18)"></div>
<svg class="a" style="left:469px;top:265px;" width="13.5" height="13" viewBox="0 0 13.5 13"><rect x="0.8" y="0.8" width="11.5" height="11.2" rx="2" fill="#fff" stroke="#666" stroke-width="1.1"/><rect x="1.4" y="3.5" width="4" height="8" fill="#8fb4d8"/><path d="M0.8 3.5H12.3" stroke="#666" stroke-width="1"/></svg>
<div class="a" style="left:1188px;top:250.3px;width:4.8px;height:128.7px;background:#7a7a7a;border-radius:3px"></div>
<div class="t" style="left:559.50px;top:362.09px;font-size:18.8px;font-weight:700;color:#1a4a6b;letter-spacing:0.037px;">Meeting Minutes: Project Phoenix</div>
<div class="t" style="left:559.50px;top:404.58px;font-size:12.9px;font-weight:700;color:#1f1f1f;letter-spacing:-0.357px;">Meeting:</div>
<div class="t" style="left:614.50px;top:404.58px;font-size:12.9px;font-weight:400;color:#1f1f1f;letter-spacing:-0.151px;">"Project Phoenix" Feature Release</div>
<div class="t" style="left:559.50px;top:434.58px;font-size:12.9px;font-weight:700;color:#1f1f1f;letter-spacing:-0.434px;">Date:</div>
<div class="t" style="left:594.50px;top:434.58px;font-size:12.9px;font-weight:400;color:#1f1f1f;letter-spacing:-0.225px;">February 18, 2025</div>
<div class="t" style="left:559.50px;top:464.58px;font-size:12.9px;font-weight:700;color:#1f1f1f;letter-spacing:-0.539px;">Time:</div>
<div class="t" style="left:595.50px;top:464.58px;font-size:12.9px;font-weight:400;color:#1f1f1f;letter-spacing:-0.367px;">10:00 AM - 11:00 AM PST</div>
<div class="t" style="left:559.50px;top:495.33px;font-size:12.9px;font-weight:700;color:#1f1f1f;letter-spacing:-0.314px;">Location:</div>
<div class="t" style="left:618.00px;top:495.33px;font-size:12.9px;font-weight:400;color:#1f1f1f;letter-spacing:0.000px;">Virtual Meeting</div>
<div class="t" style="left:559.50px;top:526.08px;font-size:12.9px;font-weight:700;color:#1f1f1f;letter-spacing:-0.243px;">1. Opening and Introductions (10:00 AM - 10:05 AM)</div>
<div class="a" style="left:579.2px;top:562.0px;width:4.8px;height:4.8px;background:#1f1f1f;border-radius:50%"></div>
<div class="t" style="left:598.40px;top:558.08px;font-size:12.9px;font-weight:400;color:#1f1f1f;letter-spacing:-0.016px;">John Smith opened the meeting, welcoming all attendees.</div>
<div class="a" style="left:579.2px;top:579.2px;width:4.8px;height:4.8px;background:#1f1f1f;border-radius:50%"></div>
<div class="t" style="left:598.40px;top:575.28px;font-size:12.9px;font-weight:400;color:#1f1f1f;letter-spacing:0.037px;">Brief introductions were made, confirming everyone's role in the demo recording</div>
<div class="t" style="left:598.40px;top:592.28px;font-size:12.9px;font-weight:400;color:#1f1f1f;letter-spacing:0.069px;">process.</div>
<div class="a" style="left:579.2px;top:613.8px;width:4.8px;height:4.8px;background:#1f1f1f;border-radius:50%"></div>
<div class="t" style="left:598.40px;top:609.88px;font-size:12.9px;font-weight:400;color:#1f1f1f;letter-spacing:0.034px;">John outlined the purpose of the meeting: to finalize the script and technical setup</div>
<div class="t" style="left:598.40px;top:627.08px;font-size:12.9px;font-weight:400;color:#1f1f1f;letter-spacing:-0.009px;">for the "Project Phoenix" feature demo recording.</div>
<div class="a" style="left:579.2px;top:692.6px;width:4.8px;height:4.8px;background:#1f1f1f;border-radius:50%"></div>
<div class="t" style="left:598.40px;top:688.68px;font-size:12.9px;font-weight:400;color:#1f1f1f;letter-spacing:-0.030px;">Sarah Jones presented the draft script for the demo recording.</div>
<div class="a" style="left:579.2px;top:710.0px;width:4.8px;height:4.8px;background:#1f1f1f;border-radius:50%"></div>
<div class="t" style="left:598.40px;top:706.08px;font-size:12.9px;font-weight:400;color:#1f1f1f;letter-spacing:0.019px;">Attendees reviewed the script, focusing on:</div>
<div class="t" style="left:558.40px;top:658.08px;font-size:12.9px;font-weight:700;color:#1f1f1f;letter-spacing:-0.224px;">2. Script Review and Finalization (10:05 AM - 10:25 AM)</div>
<div class="t" style="left:616.50px;top:723.68px;font-size:12.9px;font-weight:400;color:#1f1f1f;letter-spacing:0.000px;">o</div>
<div class="t" style="left:638.40px;top:723.68px;font-size:12.9px;font-weight:400;color:#1f1f1f;letter-spacing:-0.020px;">Clarity and conciseness of language.</div>
<div class="a" style="left:477px;top:740px;width:682px;height:7.3px;overflow:hidden">
<div class="t" style="left:139.5px;top:1.08px;font-size:12.9px;color:#1f1f1f">o</div>
<div class="t" style="left:161.39999999999998px;top:1.08px;font-size:12.9px;color:#1f1f1f;letter-spacing:0.1px">Accuracy of technical information.</div>
</div>
<div class="a" style="left:456.4px;top:751.3px;width:714px;height:5.3px;background:#7a7a7a;border-radius:3px"></div>
<div class="a" style="left:452px;top:761px;width:746px;height:1px;background:#e6e6e6"></div>
<div class="t" style="left:466.50px;top:767.53px;font-size:10px;font-weight:400;color:#616161;letter-spacing:-0.266px;">Page 1 of 2</div>
<div class="t" style="left:523.60px;top:767.53px;font-size:10px;font-weight:400;color:#616161;letter-spacing:-0.093px;">445 words</div>
<div class="t" style="left:577.00px;top:767.53px;font-size:10px;font-weight:400;color:#616161;letter-spacing:-0.407px;">English (U.S.)</div>
<div class="t" style="left:1002.40px;top:767.53px;font-size:10px;font-weight:400;color:#616161;letter-spacing:-0.993px;">100%</div>
<div class="t" style="left:1045.40px;top:767.53px;font-size:10px;font-weight:400;color:#616161;letter-spacing:-0.505px;">Fit</div>
<div class="t" style="left:1063.80px;top:767.53px;font-size:10px;font-weight:400;color:#616161;letter-spacing:-0.069px;">Give Feedback to Microsoft</div>
<div class="a" style="left:797.4px;top:761.4px;width:32.4px;height:19.6px;background:#e3e3e3;border-radius:3px"></div>
<svg class="a" style="left:809px;top:767.5px;" width="10" height="11" viewBox="0 0 10 11"><path d="M1 1H5.5L8.8 4.3V10H1Z" fill="none" stroke="#555" stroke-width="1"/></svg>
<div class="a" style="left:841.7px;top:771.5px;width:9.3px;height:1.2px;background:#555"></div>
<div class="a" style="left:870.4px;top:771.5px;width:20px;height:1.6px;background:#1f5fc5"></div>
<div class="a" style="left:890px;top:771.5px;width:68px;height:1.2px;background:#777"></div>
<svg class="a" style="left:884px;top:766px;" width="12" height="12" viewBox="0 0 12 12"><circle cx="6" cy="6" r="5.5" fill="#fff"/><circle cx="6" cy="6" r="4.2" fill="#1f5fc5"/></svg>
<svg class="a" style="left:976.5px;top:767.5px;" width="11" height="11" viewBox="0 0 11 11"><path d="M5.2 0.5V9.8M0.5 5.2H9.8" stroke="#555" stroke-width="1.1"/></svg>
<svg class="a" style="left:1029.5px;top:766.5px;" width="11" height="11" viewBox="0 0 11 11"><path d="M0.8 3.5V0.8H10.2V3.5M0.8 6.5V9.5H3M10.2 6.5V9.5H8" fill="none" stroke="#555" stroke-width="1.1"/></svg>
<div class="a" style="left:459px;top:213.5px;width:731.8px;height:32.8px;background:#fff;border-radius:8px;box-shadow:0 1px 3px rgba(0,0,0,.14),0 0 1px rgba(0,0,0,.1)"></div>
<svg class="a" style="left:472px;top:222px;" width="14" height="15" viewBox="0 0 14 15"><path d="M1.5 5.2C4 3.2 7 2.5 9.3 3.6C11.6 4.8 12 7.6 10.8 9.8L6 14.5" fill="none" stroke="#c0c0c0" stroke-width="1.2" stroke-linecap="round"/><path d="M1.3 1.2L1.5 5.4L5.5 5.6" fill="none" stroke="#c0c0c0" stroke-width="1.2" stroke-linecap="round" stroke-linejoin="round"/></svg>
<svg class="a" style="left:491px;top:225.8px;" width="9.5" height="5.5" viewBox="0 0 9.5 5.5"><path d="M0.6 0.6L4.75 4.9L8.9 0.6" fill="none" stroke="#444" stroke-width="1.2"/></svg>
<svg class="a" style="left:510.5px;top:221.5px;" width="12" height="15" viewBox="0 0 12 15"><rect x="1.2" y="1.5" width="9.6" height="12.8" rx="1.8" fill="none" stroke="#444" stroke-width="1.2"/><path d="M3.5 1.6H8.5" stroke="#444" stroke-width="2"/></svg>
<svg class="a" style="left:529px;top:225.8px;" width="9.5" height="5.5" viewBox="0 0 9.5 5.5"><path d="M0.6 0.6L4.75 4.9L8.9 0.6" fill="none" stroke="#444" stroke-width="1.2"/></svg>
<svg class="a" style="left:549.2px;top:221.5px;" width="12" height="15" viewBox="0 0 12 15"><rect x="1" y="0.8" width="9" height="7" rx="1" fill="#f2b233" stroke="#c98a10" stroke-width="0.8"/><rect x="3" y="2.5" width="4" height="2.5" fill="#fff" opacity=".45"/><path d="M1.3 8.2H9.7L7.2 10.5V13.5H3.8V10.5Z" fill="#fff" stroke="#777" stroke-width="0.9" stroke-linejoin="round"/></svg>
<div class="a" style="left:571.7px;top:219.7px;width:1px;height:19.7px;background:#e0e0e0"></div>
<div class="a" style="left:575px;top:216px;width:27.2px;height:26.2px;background:#ebebeb;border:1px solid #b0b0b0;border-radius:4px"></div>
<div class="t" style="left:584.40px;top:222.38px;font-size:14.2px;font-weight:700;color:#333;letter-spacing:0.000px;">B</div>
<svg class="a" style="left:609.5px;top:222.5px;" width="13" height="13" viewBox="0 0 13 13"><path d="M5.5 1H11.5M1.5 12H7.5M8.5 1L4.5 12" fill="none" stroke="#444" stroke-width="1.1"/></svg>
<svg class="a" style="left:637.5px;top:222px;" width="11" height="15" viewBox="0 0 11 15"><path d="M2 1V7.5C2 9.8 3.3 11 5.3 11C7.3 11 8.6 9.8 8.6 7.5V1" fill="none" stroke="#444" stroke-width="1.1"/><path d="M1 13.5H9.6" stroke="#444" stroke-width="1.1"/></svg>
<div class="a" style="left:659px;top:219.7px;width:1px;height:19.7px;background:#e0e0e0"></div>
<svg class="a" style="left:670.2px;top:222px;" width="15" height="13" viewBox="0 0 15 13"><circle cx="1.8" cy="2.5" r="1.1" fill="#4a7f95"/><circle cx="1.8" cy="7" r="1.1" fill="#4a7f95"/><circle cx="1.8" cy="11.5" r="1.1" fill="#4a7f95"/><path d="M5 2.5H14M5 7H14M5 11.5H14" stroke="#555" stroke-width="1.1"/></svg>
<svg class="a" style="left:688.4px;top:225.8px;" width="9.5" height="5.5" viewBox="0 0 9.5 5.5"><path d="M0.6 0.6L4.75 4.9L8.9 0.6" fill="none" stroke="#444" stroke-width="1.2"/></svg>
<svg class="a" style="left:707px;top:222.5px;" width="15" height="12" viewBox="0 0 15 12"><path d="M0.5 1.5H14M0.5 5.5H11M0.5 9.5H8" stroke="#444" stroke-width="1.1"/></svg>
<svg class="a" style="left:726.8px;top:225.8px;" width="9.5" height="5.5" viewBox="0 0 9.5 5.5"><path d="M0.6 0.6L4.75 4.9L8.9 0.6" fill="none" stroke="#444" stroke-width="1.2"/></svg>
<div class="a" style="left:743.4px;top:219.7px;width:1px;height:19.7px;background:#e0e0e0"></div>
<div class="a" style="left:747.5px;top:216.5px;width:103.5px;height:25.2px;background:#fff;border:1.3px solid #6e6e6e;border-radius:4px"></div>
<div class="t" style="left:752.80px;top:220.66px;font-size:16px;font-weight:400;color:#1e3a52;letter-spacing:-0.282px;">Heading 2</div>
<div class="a" style="left:851px;top:216.5px;width:14px;height:25.2px;background:#fff;border:1px solid #e6e6e6;border-left:none;border-radius:0 4px 4px 0"></div>
<svg class="a" style="left:853.5px;top:225.8px;" width="9" height="5.3" viewBox="0 0 9 5.3"><path d="M0.6 0.6L4.5 4.7L8.4 0.6" fill="none" stroke="#444" stroke-width="1.1"/></svg>
<div class="a" style="left:868.5px;top:219.7px;width:1px;height:19.7px;background:#e0e0e0"></div>
<svg class="a" style="left:879.5px;top:222px;" width="13" height="13" viewBox="0 0 13 13"><circle cx="5" cy="5" r="4" fill="none" stroke="#444" stroke-width="1.2"/><path d="M8 8L11.8 11.8" stroke="#444" stroke-width="1.3"/></svg>
<svg class="a" style="left:897.5px;top:225.8px;" width="9.5" height="5.5" viewBox="0 0 9.5 5.5"><path d="M0.6 0.6L4.75 4.9L8.9 0.6" fill="none" stroke="#444" stroke-width="1.2"/></svg>
<div class="a" style="left:914.4px;top:219.7px;width:1px;height:19.7px;background:#e0e0e0"></div>
<svg class="a" style="left:924px;top:221px;" width="13" height="16" viewBox="0 0 13 16"><rect x="3.5" y="0.8" width="5.5" height="9" rx="2.75" fill="#6aa3e0" stroke="#2b6cb0" stroke-width="0.8"/><path d="M1.5 7C1.5 10 3.5 11.8 6.25 11.8C9 11.8 11 10 11 7M6.25 11.8V14.5" fill="none" stroke="#444" stroke-width="1.1"/></svg>
<svg class="a" style="left:942.5px;top:225.8px;" width="9.5" height="5.5" viewBox="0 0 9.5 5.5"><path d="M0.6 0.6L4.75 4.9L8.9 0.6" fill="none" stroke="#444" stroke-width="1.2"/></svg>
<div class="a" style="left:959.4px;top:219.7px;width:1px;height:19.7px;background:#e0e0e0"></div>
<svg class="a" style="left:969.5px;top:220.5px;" width="16" height="16" viewBox="0 0 16 16"><path d="M1.5 14.5L2.5 11L9.5 4L11.5 6L4.5 13Z" fill="none" stroke="#444" stroke-width="1.1" stroke-linejoin="round"/><path d="M9.5 4L11 2.5L13 4.5L11.5 6" fill="#2b6cb0" stroke="#2b6cb0" stroke-width="1"/><path d="M12.5 0.5V2M14.5 1.5L13.5 2.5M15 4H13.8" stroke="#2b6cb0" stroke-width="0.8"/></svg>
<svg class="a" style="left:989px;top:225.8px;" width="9.5" height="5.5" viewBox="0 0 9.5 5.5"><path d="M0.6 0.6L4.75 4.9L8.9 0.6" fill="none" stroke="#444" stroke-width="1.2"/></svg>
<div class="a" style="left:1004.8px;top:219.7px;width:1px;height:19.7px;background:#e0e0e0"></div>
<svg class="a" style="left:1013.5px;top:226.5px;" width="16" height="4" viewBox="0 0 16 4"><circle cx="2" cy="2" r="1.3" fill="#333"/><circle cx="7.5" cy="2" r="1.3" fill="#333"/><circle cx="13" cy="2" r="1.3" fill="#333"/></svg>
<div class="a" style="left:1039px;top:219.7px;width:1px;height:19.7px;background:#e0e0e0"></div>
<svg class="a" style="left:1173.5px;top:231px;" width="9.5" height="5.5" viewBox="0 0 9.5 5.5"><path d="M0.6 0.6L4.75 4.9L8.9 0.6" fill="none" stroke="#444" stroke-width="1.2"/></svg>
<div class="a" style="left:0px;top:813px;width:1280px;height:40px;background:#d3d9e1;border-radius:16px 16px 0 0"></div>
<svg class="a" style="left:3.5px;top:817.5px;" width="31" height="31" viewBox="0 0 31 31"><circle cx="15.5" cy="15.5" r="15.3" fill="#e9ecf1"/><circle cx="15.8" cy="16" r="5.9" fill="none" stroke="#333" stroke-width="2"/></svg>
<svg class="a" style="left:578.5px;top:818px;" width="29" height="29" viewBox="0 0 29 29"><circle cx="14.5" cy="14.5" r="14.3" fill="#fff"/><path d="M14.5 14.5L2.1 7.3A14.3 14.3 0 0 1 26.9 7.3Z" fill="#db4437"/><path d="M14.5 14.5L26.9 7.3A14.3 14.3 0 0 1 14.5 28.8Z" fill="#f4c20d"/><path d="M14.5 14.5L14.5 28.8A14.3 14.3 0 0 1 2.1 7.3Z" fill="#0f9d58"/><circle cx="14.5" cy="14.5" r="6.6" fill="#fff"/><circle cx="14.5" cy="14.5" r="5.1" fill="#4285f4"/></svg>
<div class="a" style="left:590px;top:850px;width:7px;height:1.5px;background:#777;border-radius:1px"></div>
<svg class="a" style="left:625.5px;top:818px;" width="29" height="29" viewBox="0 0 29 29"><circle cx="14.5" cy="14.5" r="14.2" fill="#fff"/><rect x="6" y="6" width="8" height="8" fill="#f25022"/><rect x="15" y="6" width="8" height="8" fill="#7fba00"/><rect x="6" y="15" width="8" height="8" fill="#00a4ef"/><rect x="15" y="15" width="8" height="8" fill="#ffb900"/></svg>
<div class="a" style="left:635px;top:849.5px;width:11.5px;height:2.5px;background:#333;border-radius:1px"></div>
<svg class="a" style="left:672px;top:818px;" width="29" height="29" viewBox="0 0 29 29"><circle cx="14.5" cy="14.5" r="14.2" fill="#1a73e8"/><path d="M6 9.5C6 8.7 6.6 8 7.4 8H12L13.5 9.5H21.5C22.3 9.5 23 10.2 23 11V20C23 20.8 22.3 21.5 21.5 21.5H7.4C6.6 21.5 6 20.8 6 20Z" fill="#8ee3f5"/></svg>
<div class="a" style="left:684.4px;top:850px;width:6.2px;height:1.5px;background:#777;border-radius:1px"></div>
<div class="a" style="left:1047.5px;top:819px;width:43px;height:29px;background:#fff;border-radius:14px;box-shadow:0 0 2px rgba(255,255,255,.8)"></div>
<svg class="a" style="left:1067px;top:829px;" width="16" height="10" viewBox="0 0 16 10"><rect x="0" y="2" width="7" height="5" rx="1.5" fill="#2a5db0"/><path d="M9 2H15M9 4.5H14M9 7H15" stroke="#ccc" stroke-width="0.8"/></svg>
<div class="a" style="left:1097px;top:818px;width:35.3px;height:30px;background:#e9ecf1;border-radius:15px 8px 8px 15px"></div>
<svg class="a" style="left:1107.5px;top:826.5px;" width="14" height="14" viewBox="0 0 14 14"><circle cx="7" cy="7" r="7" fill="#111"/></svg>
<div class="t" style="left:1111.90px;top:829.58px;font-size:9px;font-weight:700;color:#fff;letter-spacing:0.000px;">1</div>
<div class="a" style="left:1136px;top:818px;width:56.8px;height:30px;background:#e9ecf1;border-radius:8px"></div>
<div class="t" style="left:1147.00px;top:827.14px;font-size:12px;font-weight:400;color:#262626;letter-spacing:-0.552px;">Feb 27</div>
<div class="a" style="left:1196px;top:818px;width:79.5px;height:30px;background:#e9ecf1;border-radius:8px 15px 15px 8px"></div>
<div class="t" style="left:1207.00px;top:827.14px;font-size:12px;font-weight:400;color:#262626;letter-spacing:-0.286px;">4:02</div>
<svg class="a" style="left:1236.5px;top:828px;" width="13" height="12" viewBox="0 0 13 12"><path d="M0.5 3.5A9 9 0 0 1 12.5 3.5L6.5 11Z" fill="#262626"/></svg>
<svg class="a" style="left:1257px;top:827.5px;" width="7" height="13" viewBox="0 0 7 13"><rect x="2" y="0" width="3" height="1.5" fill="#262626"/><rect x="0.3" y="1.5" width="6.4" height="11" rx="1" fill="#262626"/></svg>
</body></html>
